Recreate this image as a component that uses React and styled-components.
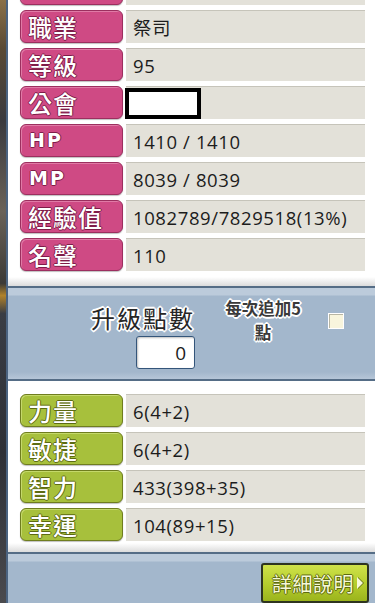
import React from "react";
import styled, { createGlobalStyle } from "styled-components";

const baseRows = [
  { label: "", value: "" },
  { label: "職業", value: "祭司" },
  { label: "等級", value: "95" },
  { label: "公會", value: null, hidden: true },
  { label: "HP", value: "1410 / 1410", latin: true },
  { label: "MP", value: "8039 / 8039", latin: true },
  { label: "經驗值", value: "1082789/7829518(13%)" },
  { label: "名聲", value: "110" },
];

const statRows = [
  { label: "力量", value: "6(4+2)" },
  { label: "敏捷", value: "6(4+2)" },
  { label: "智力", value: "433(398+35)" },
  { label: "幸運", value: "104(89+15)" },
];

class App extends React.Component {
  render() {
    return (
      <Page>
        <GlobalStyle />
        <Backdrop />
        <Frame>
          <WhitePanel $pad="0 10px 15px 12px">
            <RowList $offset="-28px">
              {baseRows.map((row, i) => (
                <Row key={i}>
                  <Label $tone="pink" $latin={row.latin}>{row.label}</Label>
                  <Value>
                    {row.hidden ? <Censor /> : row.value}
                  </Value>
                </Row>
              ))}
            </RowList>
          </WhitePanel>

          <BlueBar>
            <PointGroup>
              <OutlinedText $size="24px">升級點數</OutlinedText>
              <PointInput>0</PointInput>
            </PointGroup>
            <AddFive>
              <AddLine>每次追加5</AddLine>
              <AddLine>點</AddLine>
            </AddFive>
            <CheckBox />
          </BlueBar>

          <WhitePanel $pad="13px 10px 11px 12px">
            <RowList>
              {statRows.map((row) => (
                <Row key={row.label}>
                  <Label $tone="green">{row.label}</Label>
                  <Value>{row.value}</Value>
                </Row>
              ))}
            </RowList>
          </WhitePanel>

          <Footer>
            <DetailButton>
              詳細說明
              <Arrow />
            </DetailButton>
          </Footer>
        </Frame>
      </Page>
    );
  }
}

//STYLED-COMPONENTS
const GlobalStyle = createGlobalStyle`
  html, body {
    margin: 0;
    padding: 0;
    background: #2c2620;
  }
  * {
    box-sizing: border-box;
  }
`;

const tones = {
  pink: { body: "#cf4a84", edge: "#9c2f5f", light: "#e07aa6", text: "#7e1c48" },
  green: { body: "#a7c03c", edge: "#6f7d1f", light: "#c4d86a", text: "#5d6b12" },
};

const Page = styled.div`
  width: 375px;
  height: 603px;
  display: flex;
  overflow: hidden;
  font-family: "Open Sans", "Noto Sans CJK TC", sans-serif;
`;

const Backdrop = styled.div`
  width: 6px;
  flex-shrink: 0;
  background: linear-gradient(
    180deg,
    #8a7048 0%,
    #5a4a34 8%,
    #3a3a3e 20%,
    #6a6258 35%,
    #3c3a36 47%,
    #b0822a 49%,
    #3a3d44 52%,
    #2e3036 75%,
    #4a4a4e 100%
  );
`;

const Frame = styled.div`
  flex: 1;
  display: flex;
  flex-direction: column;
  border-left: 2px solid #4b6380;
  background: #f6f6f8;
`;

const WhitePanel = styled.div`
  padding: ${(p) => p.$pad};
  background: linear-gradient(180deg, #ffffff 0, #ffffff calc(100% - 9px), #dcdcdc 100%);
`;

const RowList = styled.div`
  display: flex;
  flex-direction: column;
  gap: 5px;
  margin-top: ${(p) => p.$offset || "0"};
`;

const Row = styled.div`
  display: grid;
  grid-template-columns: 103px 1fr;
  gap: 3px;
  height: 33px;
`;

const Label = styled.div`
  display: flex;
  align-items: center;
  padding-left: ${(p) => (p.$latin ? "8px" : "7px")};
  border-radius: 6px;
  background: ${(p) => tones[p.$tone].body};
  border: 1px solid ${(p) => tones[p.$tone].edge};
  box-shadow: inset 1px 1px 0 ${(p) => tones[p.$tone].light}, 0 1px 1px rgba(0, 0, 0, 0.25);
  color: #ffffff;
  font-family: ${(p) =>
    p.$latin ? '"DejaVu Sans", sans-serif' : '"Noto Sans CJK TC", sans-serif'};
  font-weight: ${(p) => (p.$latin ? 700 : 500)};
  font-size: ${(p) => (p.$latin ? "19px" : "24px")};
  letter-spacing: ${(p) => (p.$latin ? "2px" : "1px")};
  line-height: 1;
  text-shadow: 1px 0 ${(p) => tones[p.$tone].text}, -1px 0 ${(p) => tones[p.$tone].text},
    0 1px ${(p) => tones[p.$tone].text}, 0 -1px ${(p) => tones[p.$tone].text};
`;

const Value = styled.div`
  display: flex;
  align-items: center;
  padding-left: 7px;
  background: #e3e1d9;
  border-top: 1px solid #c6c4ba;
  color: #1c1c1c;
  font-size: 18.5px;
  letter-spacing: 0.6px;
`;

const Censor = styled.div`
  width: 76px;
  height: 31px;
  margin-left: -8px;
  background: #ffffff;
  border: 4px solid #000000;
`;

const BlueBar = styled.div`
  height: 100px;
  display: flex;
  align-items: flex-start;
  padding: 16px 0 0 77px;
  border-top: 2px solid #556d86;
  border-bottom: 2px solid #556d86;
  background: linear-gradient(
    180deg,
    #bccbdb 0,
    #bccbdb 7px,
    #a3b7cc 8px,
    #a3b7cc calc(100% - 7px),
    #b6c6d8 100%
  );
`;

const OutlinedText = styled.div`
  font-family: "Noto Sans CJK TC", sans-serif;
  font-size: ${(p) => p.$size};
  letter-spacing: 2px;
  line-height: 28px;
  color: #262626;
  text-shadow: 2px 0 #fff, -2px 0 #fff, 0 2px #fff, 0 -2px #fff, 1px 1px #fff,
    -1px -1px #fff, 1px -1px #fff, -1px 1px #fff;
`;

const PointGroup = styled.div`
  width: 110px;
  display: flex;
  flex-direction: column;
  align-items: flex-end;
  gap: 4px;
`;

const PointInput = styled.div`
  width: 59px;
  height: 33px;
  padding-right: 8px;
  display: flex;
  align-items: center;
  justify-content: flex-end;
  background: #ffffff;
  border: 1px solid #34557a;
  border-radius: 3px;
  box-shadow: inset 1px 1px 2px rgba(0, 0, 0, 0.25);
  font-size: 19px;
  color: #1c1c1c;
`;

const AddFive = styled.div`
  width: 92px;
  margin: -8px 0 0 22px;
  display: flex;
  flex-direction: column;
  align-items: center;
`;

const AddLine = styled.div`
  height: 24px;
  font-family: "Noto Sans CJK TC", sans-serif;
  font-weight: 700;
  font-size: 16.5px;
  line-height: 24px;
  color: #3a3a3a;
  text-shadow: 2px 0 #fff, -2px 0 #fff, 0 2px #fff, 0 -2px #fff, 1px 1px #fff,
    -1px -1px #fff, 1px -1px #fff, -1px 1px #fff;
`;

const CheckBox = styled.div`
  width: 16px;
  height: 16px;
  margin: 9px 0 0 19px;
  background: #f8f5dd;
  border: 1px solid #ffffff;
  box-shadow: inset 1px 1px 0 #b8b6a4;
`;

const Footer = styled.div`
  flex: 1;
  display: flex;
  justify-content: flex-end;
  align-items: flex-start;
  padding: 9px 6px 0 0;
  border-top: 2px solid #556d86;
  background: linear-gradient(180deg, #bccbdb 0, #bccbdb 7px, #a3b7cc 8px);
`;

const DetailButton = styled.div`
  width: 108px;
  height: 40px;
  display: flex;
  align-items: center;
  padding-left: 9px;
  gap: 3px;
  border: 2px solid #2e3420;
  border-radius: 3px;
  background: linear-gradient(180deg, #cfe24a 0%, #b4cc2c 55%, #9bb41c 100%);
  font-family: "Noto Sans CJK TC", sans-serif;
  font-size: 20px;
  letter-spacing: 0.5px;
  color: #f7f9d8;
  text-shadow: 1px 0 #5d6a10, -1px 0 #5d6a10, 0 1px #5d6a10, 0 -1px #5d6a10;
`;

const Arrow = styled.span`
  width: 0;
  height: 0;
  border-top: 6px solid transparent;
  border-bottom: 6px solid transparent;
  border-left: 6px solid #f7f9d8;
  filter: drop-shadow(1px 0 0 #5d6a10);
`;

export default App;
